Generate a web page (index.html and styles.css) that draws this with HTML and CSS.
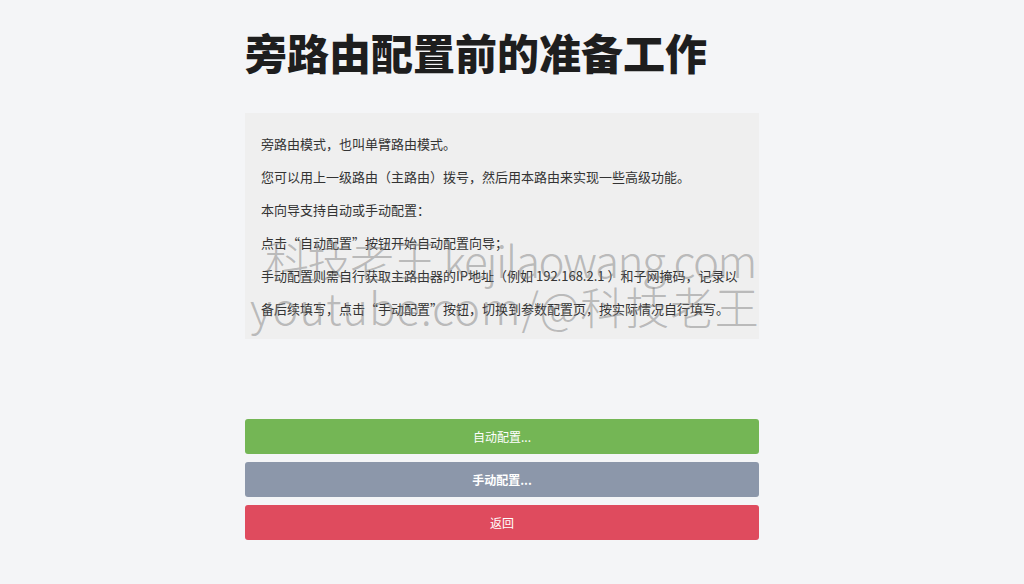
FILE: index.html
```html
<!DOCTYPE html>
<html lang="zh-CN">
<head>
    <meta charset="UTF-8">
    <title>旁路由配置前的准备工作</title>
    <link rel="stylesheet" href="styles.css">
</head>
<body>
    <div class="wizard">
        <h1>旁路由配置前的准备工作</h1>

        <div class="intro">
            <p>旁路由模式，也叫单臂路由模式。</p>
            <p>您可以用上一级路由（主路由）拨号，然后用本路由来实现一些高级功能。</p>
            <p>本向导支持自动或手动配置：</p>
            <p>点击“自动配置”按钮开始自动配置向导；</p>
            <p>手动配置则需自行获取主路由器的IP地址（例如 192.168.2.1 ）和子网掩码，记录以备后续填写，点击“手动配置”按钮，切换到参数配置页，按实际情况自行填写。</p>
        </div>

        <div class="actions">
            <button class="btn btn-auto">自动配置...</button>
            <button class="btn btn-manual">手动配置...</button>
            <button class="btn btn-back">返回</button>
        </div>
    </div>

    <div class="watermark">
        <div class="wm-site">科技老王 kejilaowang.com</div>
        <div class="wm-tube">youtube.com/@科技老王</div>
    </div>
</body>
</html>
```

FILE: styles.css
```css
body { margin: 0; padding-right: 20px; background: #f4f5f7; font-family: "Noto Sans CJK SC", "Noto Sans", sans-serif; color: #333; }
.wizard { width: 514px; margin: 0 auto; padding-top: 27px; }
h1 { margin: 0; font-size: 42px; line-height: 50px; font-weight: 900; color: #1e1e1e; }
.intro { margin-top: 36px; padding: 14px 16px; background: #efefef; font-size: 13px; color: #333; }
.intro p { margin: 0; line-height: 33px; }
.actions { margin-top: 80px; display: flex; flex-direction: column; gap: 8px; }
.btn { height: 35px; border: none; border-radius: 3px; color: #fff; font-size: 12px; font-family: inherit; cursor: pointer; }
.btn-auto { background: #74b655; }
.btn-manual { background: #8c97aa; font-weight: bold; }
.btn-back { background: #df4b5e; }
.watermark { position: absolute; left: 250px; top: 236px; font-size: 44px; line-height: 47px; font-weight: 200; color: rgba(120, 120, 120, 0.45); pointer-events: none; white-space: nowrap; }
.wm-site { margin-left: 15px; letter-spacing: -1.5px; }
.wm-tube { letter-spacing: 0.8px; }
```
